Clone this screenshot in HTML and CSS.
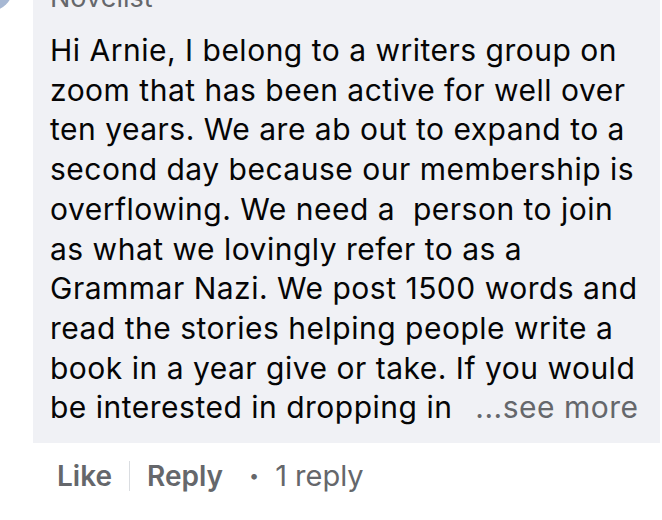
FILE: index.html
```html
<!DOCTYPE html>
<html lang="en">
<head>
    <meta charset="UTF-8">
    <title>Comment</title>
    <link rel="stylesheet" href="styles.css">
</head>
<body>

<div class="comentario">
    <div class="avatar"></div>
    <div class="cuerpo">
        <div class="burbuja">
            <div class="autor">Novelist</div>
            <p class="texto">Hi Arnie, I belong to a writers group on<br>
                zoom that has been active for well over<br>
                ten years. We are ab out to expand to a<br>
                second day because our membership is<br>
                overflowing. We need a&nbsp; person to join<br>
                as what we lovingly refer to as a<br>
                Grammar Nazi. We post 1500 words and<br>
                read the stories helping people write a<br>
                book in a year give or take. If you would<br>
                be interested in dropping in <span class="ver-mas">...see more</span></p>
        </div>
        <div class="acciones">
            <span class="accion">Like</span>
            <span class="separador"></span>
            <span class="accion">Reply</span>
            <span class="punto">•</span>
            <span class="respuestas">1 reply</span>
        </div>
    </div>
</div>

</body>
</html>
```

FILE: styles.css
```css
body {
    margin: 0;
    background-color: #ffffff;
    font-family: Inter, "Noto Sans", sans-serif;
    color: #050505;
    overflow: hidden;
}
.comentario {
    display: flex;
    margin-top: -28px;
}
.avatar {
    width: 46px;
    height: 46px;
    border-radius: 50%;
    background-color: #a7b8d3;
    margin-left: -33px;
    margin-top: -7px;
    margin-right: 20px;
    flex-shrink: 0;
}
.cuerpo {
    width: 627px;
}
.burbuja {
    background-color: #f0f1f5;
    padding: 10px 0 15px 17px;
}
.autor {
    font-size: 27px;
    line-height: 32px;
    color: #65676b;
}
.texto {
    margin: 17px 0 0;
    font-size: 30px;
    line-height: 39.7px;
    letter-spacing: 0.5px;
}
.ver-mas {
    color: #65676b;
    margin-left: 14px;
}
.acciones {
    display: flex;
    align-items: center;
    padding: 15px 0 0 24px;
    font-size: 28px;
    line-height: 36px;
    color: #65676b;
}
.accion {
    font-weight: 600;
}
.separador {
    width: 1px;
    height: 30px;
    background-color: #dadde1;
    margin: 0 17px;
}
.punto {
    font-size: 18px;
    margin: 0 16px 0 26px;
}
.respuestas {
    font-size: 29px;
}
```
